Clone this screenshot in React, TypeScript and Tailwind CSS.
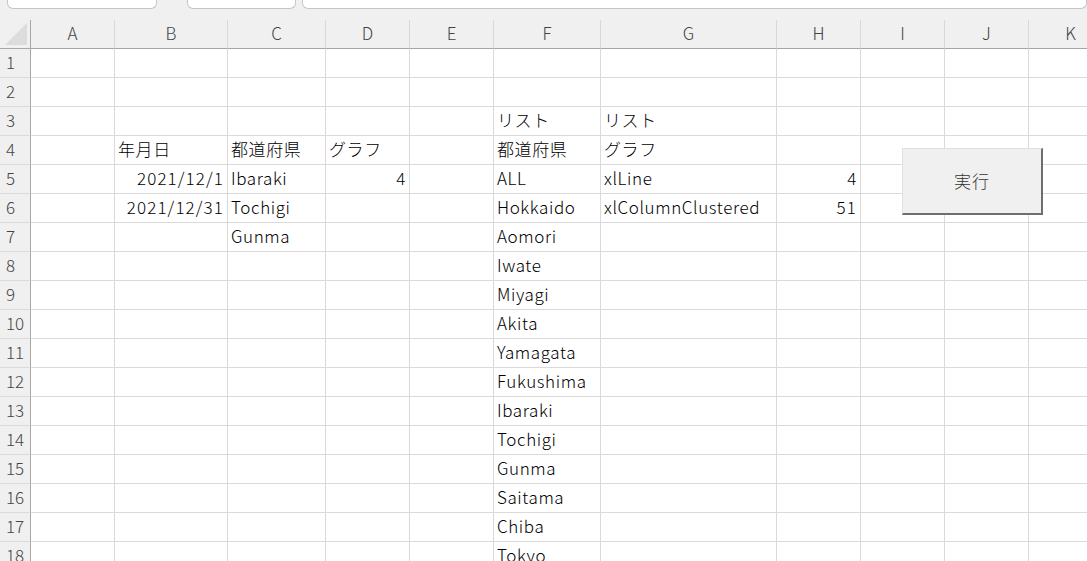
import React from "react";

const COLS = ["A", "B", "C", "D", "E", "F", "G", "H", "I", "J", "K"];

type Cell = { t: string; r?: boolean; num?: boolean };
const data: Record<number, Record<string, Cell>> = {
  3: { F: { t: "リスト" }, G: { t: "リスト" } },
  4: {
    B: { t: "年月日" },
    C: { t: "都道府県" },
    D: { t: "グラフ" },
    F: { t: "都道府県" },
    G: { t: "グラフ" },
  },
  5: {
    B: { t: "2021/12/1", r: true, num: true },
    C: { t: "Ibaraki" },
    D: { t: "4", r: true },
    F: { t: "ALL" },
    G: { t: "xlLine" },
    H: { t: "4", r: true },
  },
  6: {
    B: { t: "2021/12/31", r: true, num: true },
    C: { t: "Tochigi" },
    F: { t: "Hokkaido" },
    G: { t: "xlColumnClustered" },
    H: { t: "51", r: true, num: true },
  },
  7: { C: { t: "Gunma" }, F: { t: "Aomori" } },
  8: { F: { t: "Iwate" } },
  9: { F: { t: "Miyagi" } },
  10: { F: { t: "Akita" } },
  11: { F: { t: "Yamagata" } },
  12: { F: { t: "Fukushima" } },
  13: { F: { t: "Ibaraki" } },
  14: { F: { t: "Tochigi" } },
  15: { F: { t: "Gunma" } },
  16: { F: { t: "Saitama" } },
  17: { F: { t: "Chiba" } },
  18: { F: { t: "Tokyo" } },
};

const rows = Array.from({ length: 18 }, (_, i) => i + 1);

export default function App() {
  return (
    <div
      className="relative w-[1087px] h-[561px] overflow-hidden bg-white font-light"
      style={{ fontFamily: '"Noto Sans CJK JP", "Noto Sans", sans-serif' }}
    >
      {/* top bar */}
      <div className="h-[20px] bg-[#f0f0f0] flex items-start">
        <div className="ml-[7px] w-[151px] h-[9px] bg-white border border-t-0 border-[#c6c6c6] rounded-b-[6px]" />
        <div className="ml-[30px] w-[110px] h-[9px] bg-white border border-t-0 border-[#c6c6c6] rounded-b-[6px]" />
        <div className="ml-[6px] w-[790px] h-[9px] bg-white border border-t-0 border-[#c6c6c6] rounded-b-[6px]" />
      </div>

      <div className="grid grid-cols-[31px_84px_113px_98px_84px_84px_107px_176px_84px_84px_84px_84px] auto-rows-[29px] w-[1119px]">
        {/* header row */}
        <div className="relative bg-[#f0f0f0] border-r border-b border-r-[#a6a6a6] border-b-[#a6a6a6]">
          <svg className="absolute left-[5px] top-[3px]" width="22" height="22" viewBox="0 0 22 22">
            <polygon points="22,0 22,22 0,22" fill="#dcdcdc" />
          </svg>
        </div>
        {COLS.map((c) => (
          <div
            key={c}
            className="bg-[#f0f0f0] border-r border-r-[#d8d8d8] border-b border-b-[#a6a6a6] flex items-center justify-center pb-[3px] text-[17px] text-[#444444]"
          >
            {c}
          </div>
        ))}

        {rows.map((r) => (
          <React.Fragment key={r}>
            <div className="bg-[#f0f0f0] border-r border-r-[#a6a6a6] border-b border-b-[#dadada] flex items-center pl-[6px] pb-[2px] text-[17px] text-[#444444]">
              {r}
            </div>
            {COLS.map((c) => {
              const cell = data[r]?.[c];
              return (
                <div
                  key={c}
                  className={
                    "border-r border-b border-[#dadada] flex items-center pb-[2px] text-[17px] text-black whitespace-nowrap overflow-visible " +
                    (cell?.r ? "justify-end pr-[3px] " : "justify-start pl-[3px] ") +
                    (cell?.num ? "tracking-[1.1px]" : "tracking-[0.6px]")
                  }
                >
                  {cell?.t ?? ""}
                </div>
              );
            })}
          </React.Fragment>
        ))}
      </div>

      {/* button */}
      <div className="absolute left-[902px] top-[148px] w-[141px] h-[67px] bg-[#f0f0f0] border-t border-l border-[#e0e0e0] border-r-2 border-b-2 border-r-[#6e6e6e] border-b-[#6e6e6e] flex items-center justify-center text-[17px] text-[#333333] tracking-[1px]">
        実行
      </div>
    </div>
  );
}
